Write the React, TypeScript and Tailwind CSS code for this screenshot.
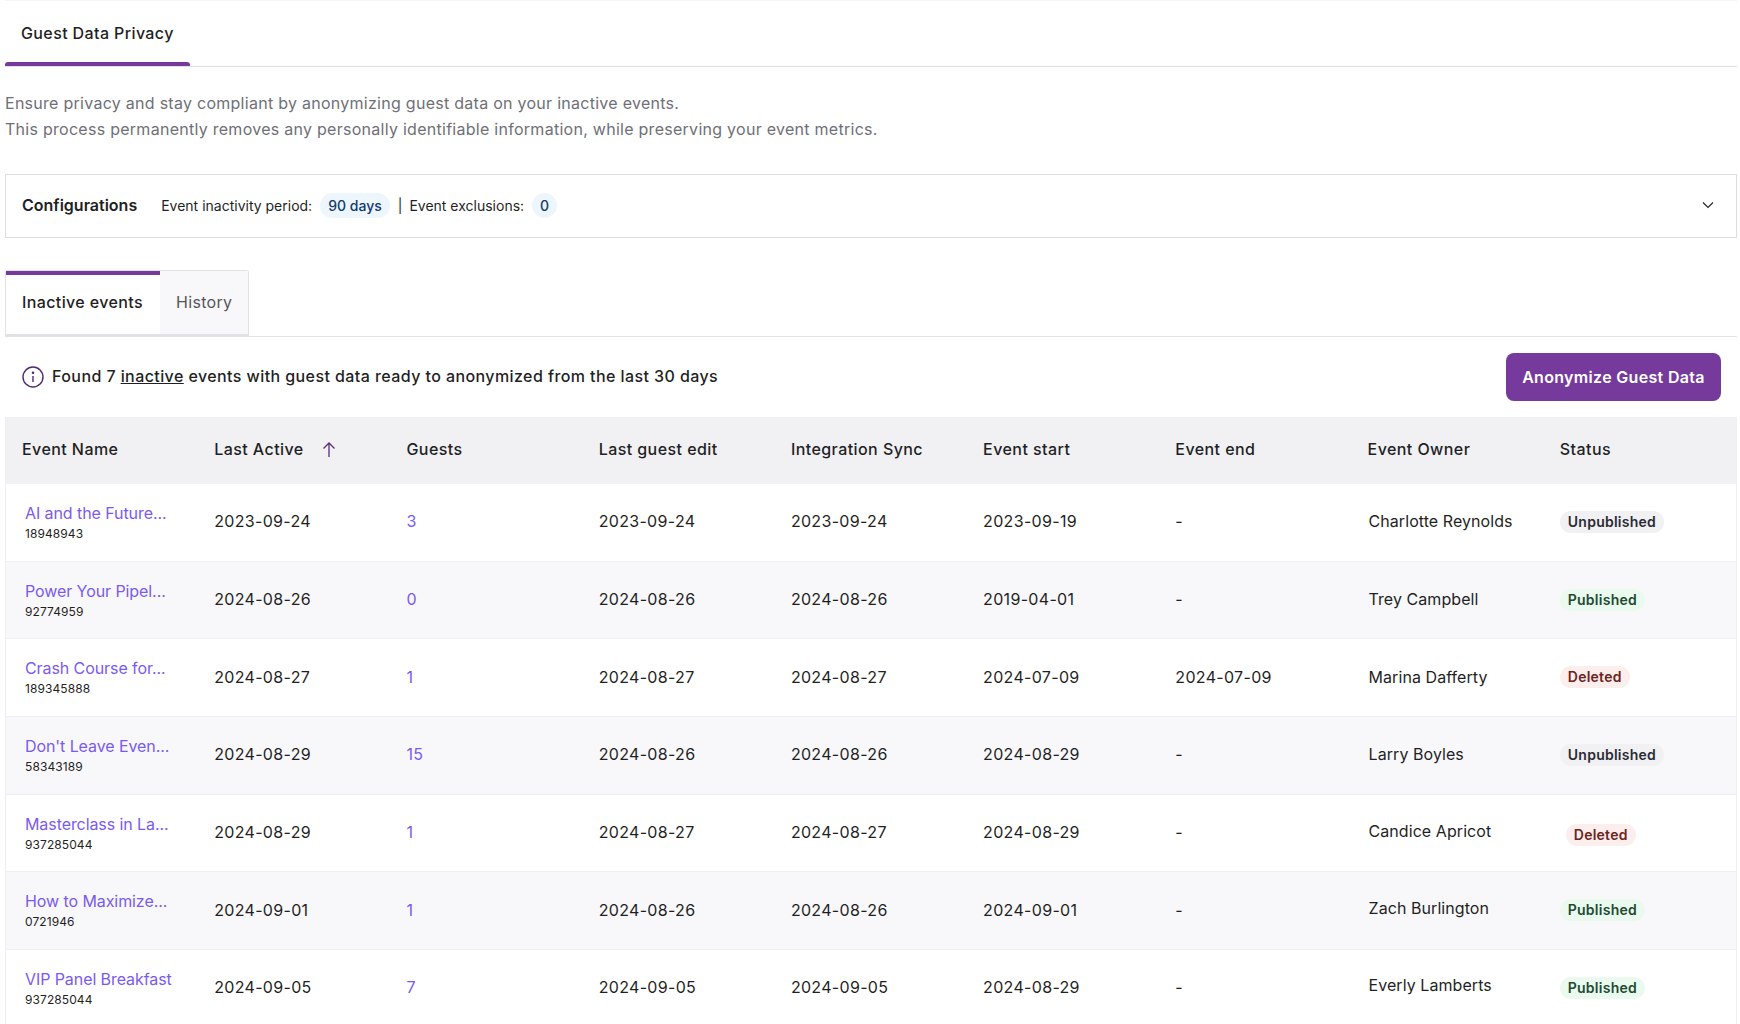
import React from "react";

type Status = "Unpublished" | "Published" | "Deleted";
type Row = {
  name: string; id: string; active: string; guests: string; edit: string; sync: string;
  start: string; end: string; owner: string; status: Status; shift?: boolean; ownerClass?: string;
};

const rows: Row[] = [
  { name: "AI and the Future...", id: "18948943", active: "2023-09-24", guests: "3", edit: "2023-09-24", sync: "2023-09-24", start: "2023-09-19", end: "-", owner: "Charlotte Reynolds", status: "Unpublished" },
  { name: "Power Your Pipel...", id: "92774959", active: "2024-08-26", guests: "0", edit: "2024-08-26", sync: "2024-08-26", start: "2019-04-01", end: "-", owner: "Trey Campbell", status: "Published" },
  { name: "Crash Course for...", id: "189345888", active: "2024-08-27", guests: "1", edit: "2024-08-27", sync: "2024-08-27", start: "2024-07-09", end: "2024-07-09", owner: "Marina Dafferty", status: "Deleted" },
  { name: "Don't Leave Even...", id: "58343189", active: "2024-08-29", guests: "15", edit: "2024-08-26", sync: "2024-08-26", start: "2024-08-29", end: "-", owner: "Larry Boyles", status: "Unpublished" },
  { name: "Masterclass in La...", id: "937285044", active: "2024-08-29", guests: "1", edit: "2024-08-27", sync: "2024-08-27", start: "2024-08-29", end: "-", owner: "Candice Apricot", status: "Deleted", shift: true, ownerClass: "mb-[2px]" },
  { name: "How to Maximize...", id: "0721946", active: "2024-09-01", guests: "1", edit: "2024-08-26", sync: "2024-08-26", start: "2024-09-01", end: "-", owner: "Zach Burlington", status: "Published", ownerClass: "mb-[4px]" },
  { name: "VIP Panel Breakfast", id: "937285044", active: "2024-09-05", guests: "7", edit: "2024-09-05", sync: "2024-09-05", start: "2024-08-29", end: "-", owner: "Everly Lamberts", status: "Published", ownerClass: "mb-[4px]" },
];

const statusClass: Record<Status, string> = {
  Unpublished: "bg-[#f1f1f4] text-[#2b2b33]",
  Published: "bg-[#eafaee] text-[#1f4a33]",
  Deleted: "bg-[#fdeeee] text-[#6b2420]",
};

const headers = ["Event Name", "Last Active", "Guests", "Last guest edit", "Integration Sync", "Event start", "Event end", "Event Owner", "Status"];

function ArrowUp() {
  return (
    <svg width="16" height="18" viewBox="0 0 16 18" fill="none" stroke="#5b2d7f" strokeWidth="1.3" className="ml-[17px] mt-[2px]">
      <path d="M8 16V2M2.5 7.5 8 2l5.5 5.5" />
    </svg>
  );
}

function InfoIcon() {
  return (
    <svg width="22" height="22" viewBox="0 0 22 22" fill="none" stroke="#4f2a6e" strokeWidth="1.4">
      <circle cx="11" cy="11" r="10" />
      <path d="M11 10v6" />
      <circle cx="11" cy="6.8" r="0.6" fill="#4f2a6e" />
    </svg>
  );
}

function Chevron() {
  return (
    <svg width="12" height="8" viewBox="0 0 12 8" fill="none" stroke="#25252b" strokeWidth="1.2">
      <path d="M1 1.5 6 6.5l5-5" />
    </svg>
  );
}

export default function App() {
  return (
    <div className="h-[1024px] w-[1740px] overflow-hidden bg-white pl-[5px] pr-[3px] font-['Inter',sans-serif] text-[#1f1f24]">
      <div className="flex h-[67px] items-stretch border-b border-t border-b-[#dfdfe6] border-t-[#f5f5f7]">
        <div className="flex w-[185px] flex-col">
          <div className="flex flex-1 items-center pl-4 pt-[2px] text-[16px] font-medium tracking-[0.024em]">
            Guest Data Privacy
          </div>
          <div className="h-[4px] rounded-t-[3px] bg-[#753a9c]" />
        </div>
      </div>

      <div className="pt-[23px] text-[16px] leading-[26px] tracking-[0.017em] text-[#6f6f78]">
        <p>Ensure privacy and stay compliant by anonymizing guest data on your inactive events.</p>
        <p>This process permanently removes any personally identifiable information, while preserving your event metrics.</p>
      </div>

      <div className="mt-[32px] flex h-[64px] items-center border border-[#dcdce4] pb-[2px] pl-4 pr-[22px]">
        <span className="text-[16px] font-semibold">Configurations</span>
        <span className="ml-6 text-[14px]">Event inactivity period:</span>
        <span className="ml-2 rounded-full bg-[#edf5fd] px-2 py-[2px] text-[14px] font-medium text-[#123a6b]">90 days</span>
        <span className="ml-[8px] text-[14px]">|</span>
        <span className="ml-[7px] text-[14px]">Event exclusions:</span>
        <span className="ml-2 rounded-full bg-[#edf5fd] px-2 py-[2px] text-[14px] font-medium text-[#123a6b]">0</span>
        <span className="ml-auto"><Chevron /></span>
      </div>

      <div className="mt-[32px] flex h-[67px] border-b border-[#e1e1e8]">
        <div className="flex h-[66px] rounded-t-[3px] border-x border-b-2 border-t border-[#e1e1e8]">
          <div className="flex w-[154px] items-center border-t-4 border-[#753a9c] pb-[5px] pl-4 text-[16px] font-medium tracking-[0.024em]">Inactive events</div>
          <div className="flex w-[88px] items-center bg-[#f8f8fb] pb-[1px] pl-4 text-[16px] tracking-[0.02em] text-[#55555e]">History</div>
        </div>
      </div>

      <div className="flex h-[80px] items-center justify-between pl-[17px] pr-[16px]">
        <div className="flex items-center gap-[8px] text-[16px] font-medium tracking-[0.026em]">
          <InfoIcon />
          <span className="pb-[2px]">Found 7 <span className="underline">inactive</span> events with guest data ready to anonymized from the last 30 days</span>
        </div>
        <button className="flex h-[48px] w-[215px] items-center justify-center rounded-lg bg-[#753a9c] text-[16px] font-semibold tracking-[0.02em] text-white">
          Anonymize Guest Data
        </button>
      </div>

      <div className="border-x border-[#efeff3]">
        <div className="grid h-[67px] grid-cols-9 items-center bg-[#f1f1f4]">
          {headers.map((h) => (
            <div key={h} className="flex items-center pb-[3px] pl-4 text-[16px] font-medium tracking-[0.027em]">
              {h}
              {h === "Last Active" && <ArrowUp />}
            </div>
          ))}
        </div>
        {rows.map((r, i) => (
          <div key={r.name} className={`grid h-[77.7px] grid-cols-9 items-center border-b border-[#efeff3] text-[16px] tracking-[0.02em] ${i % 2 ? "bg-[#f8f8fb]" : "bg-white"}`}>
            <div className="pl-[19px]">
              <div className="whitespace-nowrap leading-[20px] tracking-[-0.005em] text-[#7a5af0]">{r.name}</div>
              <div className="mt-[3px] text-[12px] leading-[16px] tracking-[0.007em]">{r.id}</div>
            </div>
            <div className="pb-[2px] pl-4">{r.active}</div>
            <div className="pb-[2px] pl-4 text-[#7a5af0]">{r.guests}</div>
            <div className="pb-[2px] pl-4">{r.edit}</div>
            <div className="pb-[2px] pl-4">{r.sync}</div>
            <div className="pb-[2px] pl-4">{r.start}</div>
            <div className="pb-[2px] pl-4">{r.end}</div>
            <div className={`pb-[2px] pl-[17px] tracking-[0.004em] ${r.ownerClass ?? ""}`}>{r.owner}</div>
            <div className="pb-[3px] pl-4">
              <span className={`inline-block rounded-full px-2 py-[2px] text-[14px] font-semibold leading-[18px] tracking-[0.018em] ${statusClass[r.status]} ${r.shift ? "ml-[6px] mt-[6px]" : ""}`}>
                {r.status}
              </span>
            </div>
          </div>
        ))}
      </div>
    </div>
  );
}
